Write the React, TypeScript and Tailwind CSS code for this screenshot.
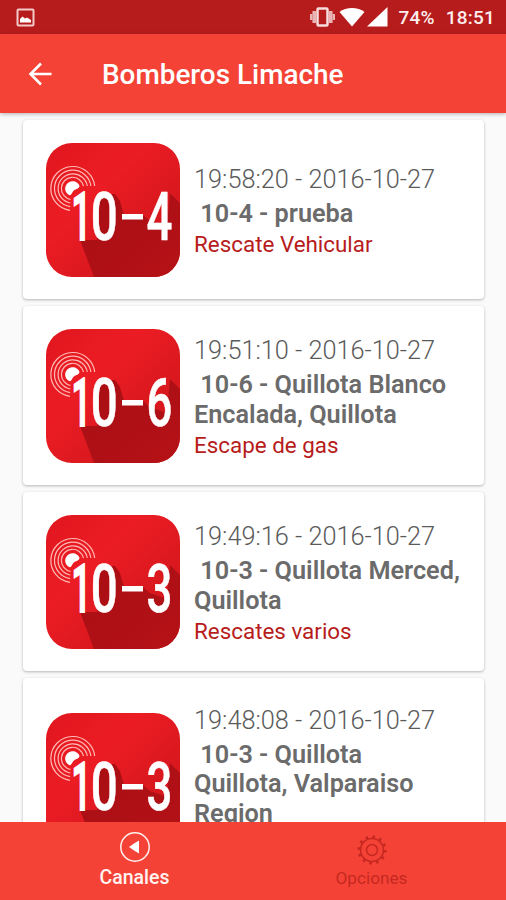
import React from "react";

type Alert = {
  code: string;
  date: string;
  lines: string[];
  kind: string;
};

const alerts: Alert[] = [
  {
    code: "4",
    date: "19:58:20 - 2016-10-27",
    lines: ["\u00a010-4 - prueba"],
    kind: "Rescate Vehicular",
  },
  {
    code: "6",
    date: "19:51:10 - 2016-10-27",
    lines: ["\u00a010-6 - Quillota Blanco", "Encalada, Quillota"],
    kind: "Escape de gas",
  },
  {
    code: "3",
    date: "19:49:16 - 2016-10-27",
    lines: ["\u00a010-3 - Quillota Merced,", "Quillota"],
    kind: "Rescates varios",
  },
  {
    code: "3",
    date: "19:48:08 - 2016-10-27",
    lines: ["\u00a010-3 - Quillota", "Quillota, Valparaiso", "Region"],
    kind: "Rescates varios",
  },
];

const CodeIcon = ({ code, id }: { code: string; id: string }) => {
  return (
    <svg width="134" height="134" viewBox="0 0 134 134" className="shrink-0">
      <defs>
        <linearGradient id={`bg-${id}`} x1="0" y1="0" x2="1" y2="1">
          <stop offset="0" stopColor="#e0161e" />
          <stop offset="0.35" stopColor="#ec1c24" />
          <stop offset="0.7" stopColor="#d8181e" />
        </linearGradient>
        <linearGradient id={`sh-${id}`} x1="0" y1="0" x2="1" y2="1">
          <stop offset="0" stopColor="#a80e13" />
          <stop offset="1" stopColor="#b51217" />
        </linearGradient>
        <clipPath id={`clip-${id}`}>
          <rect width="134" height="134" rx="26" />
        </clipPath>
      </defs>
      <g clipPath={`url(#clip-${id})`}>
        <rect width="134" height="134" fill={`url(#bg-${id})`} />
        <path
          d="M34 97L48 134H134V60L124 50L121 84L104 78L97 72H78L74 58L69 51H51V97Z"
          fill={`url(#sh-${id})`}
        />
      </g>
      <g fill="none" stroke="#ffb9b4" strokeWidth="1.2">
        <path d="M48.7 43A22 22 0 1 0 24 67.3" />
        <path d="M44.9 43A18.3 18.3 0 1 0 24.2 63.6" />
        <path d="M41.3 43A14.7 14.7 0 1 0 24.4 60" />
        <path d="M37.5 43A11.2 11.2 0 1 0 24.6 56.5" />
      </g>
      <path d="M33.500 43A7.400 7.400 0 1 0 23.500 52.300C26 52 26 49 28 47.500C30 45.500 33 46 33.500 43Z" fill="#fff" />
      <g
        fill="#fff"
        fontFamily="Roboto, sans-serif"
        fontWeight="500"
        fontSize="66"
        stroke="#fff"
        strokeWidth="0.6"
      >
        <text transform="translate(25.500 96.800) scale(0.52 1)" strokeWidth="2.2">1</text>
        <text transform="translate(44.800 96.800) scale(0.72 1)">0</text>
        <text transform="translate(100.500 96.800) scale(0.69 1)">{code}</text>
      </g>
      <rect x="76" y="71" width="21" height="5.500" fill="#fff" />
    </svg>
  );
};

const AlertCard = ({ alert, index }: { alert: Alert; index: number }) => {
  return (
    <div
      className={`flex shrink-0 items-center rounded-[4px] bg-white pl-[23px] shadow-[0_1px_3px_rgba(0,0,0,0.28)] ${
        alert.lines.length > 2 ? "h-[204px]" : "h-[179px]"
      }`}
    >
      <CodeIcon code={alert.code} id={String(index)} />
      <div className="ml-[14px] pt-[3px] whitespace-nowrap">
        <p className="text-[25.300px] leading-[38px] font-light text-[#5a5a5a]">{alert.date}</p>
        {alert.lines.map((line) => (
          <p key={line} className="text-[25.250px] leading-[29.500px] font-semibold text-[#6b6b6b]">
            {line}
          </p>
        ))}
        <p className="text-[22.400px] leading-[33px] text-[#b71c1c]">{alert.kind}</p>
      </div>
    </div>
  );
};

const StatusBar = () => {
  return (
    <div className="flex h-[34px] shrink-0 items-center bg-[#b71c1c] pr-[11px] pl-4 text-[#fdeeee]">
      <svg width="19" height="19" viewBox="0 0 19 19">
        <rect x="1.500" y="1.500" width="16" height="16" rx="1" fill="none" stroke="#f3c9c9" strokeWidth="2" />
        <path d="M4 14.500V11L6.500 8.500L9 10.500L11 9.500L15 12V14.500Z" fill="#fff" />
      </svg>
      <svg width="27" height="20" viewBox="0 0 27 20" className="ml-auto">
        <rect x="8.500" y="1.500" width="10" height="17" rx="1" fill="none" stroke="#f7dcdc" strokeWidth="2.500" />
        <path d="M5.200 4V16M21.800 4V16" stroke="#e9b3b3" strokeWidth="3.600" />
        <path d="M2.200 7V13M24.800 7V13" stroke="#e9b3b3" strokeWidth="2.400" />
      </svg>
      <svg width="26" height="20" viewBox="0 0 26 20" className="ml-[3px]">
        <path d="M0.500 5C7 -0.500 19 -0.500 25.500 5L13 19.500Z" fill="#fff" />
      </svg>
      <svg width="21" height="20" viewBox="0 0 21 20" className="ml-[2px]">
        <path d="M0 19.500L20.500 0V19.500Z" fill="#fff" />
      </svg>
      <span className="ml-[11px] pt-[3px] text-[19px] font-medium tracking-[0.200px]">74%</span>
      <span className="ml-[11px] pt-[3px] text-[19px] font-medium tracking-[0.200px]">18:51</span>
    </div>
  );
};

const BottomBar = () => {
  return (
    <div className="grid h-[78px] shrink-0 grid-cols-2 bg-[#f44336]">
      <div className="flex flex-col items-center pt-[9px] pl-4 text-[#fff2f0]">
        <svg width="32" height="32" viewBox="0 0 32 32">
          <circle cx="16" cy="16" r="14.200" fill="none" stroke="currentColor" strokeWidth="1.500" />
          <path d="M10 16L15 12.500L20 9.500V22.500L15 19.500Z" fill="#fff" />
        </svg>
        <span className="text-[19.500px] leading-[29px] font-medium">Canales</span>
      </div>
      <div className="flex flex-col items-center pt-[12px] pr-4 text-[#c62821]">
        <svg width="32" height="32" viewBox="0 0 32 32" fill="none" stroke="currentColor">
          <circle cx="16" cy="16" r="11.500" strokeWidth="1.500" />
          <circle cx="16" cy="16" r="5.500" strokeWidth="1.500" />
          <circle cx="16" cy="16" r="13.300" strokeWidth="2.600" strokeDasharray="2.600 4.364" />
        </svg>
        <span className="text-[17.200px] leading-[24px]">Opciones</span>
      </div>
    </div>
  );
};

const App = () => {
  return (
    <div className="flex h-[900px] w-[506px] flex-col overflow-hidden bg-[#fafafa] font-[Roboto,sans-serif]">
      <StatusBar />
      <header className="z-10 flex h-[79px] shrink-0 items-center bg-[#f44336] pl-7 text-white shadow-[0_1px_4px_rgba(0,0,0,0.3)]">
        <svg width="24" height="24" viewBox="0 0 24 24" fill="none" stroke="#fff" strokeWidth="2.600">
          <path d="M23.500 12H2.500M13 1.500L2.500 12L13 22.500" />
        </svg>
        <h1 className="ml-[50px] pt-[3px] text-[27.900px] font-medium">Bomberos Limache</h1>
      </header>
      <main className="flex min-h-0 flex-1 flex-col gap-[7px] overflow-hidden pt-[7px] pr-[22px] pl-[23px]">
        {alerts.map((alert, i) => (
          <AlertCard key={alert.date} alert={alert} index={i} />
        ))}
      </main>
      <BottomBar />
    </div>
  );
};

export default App;
